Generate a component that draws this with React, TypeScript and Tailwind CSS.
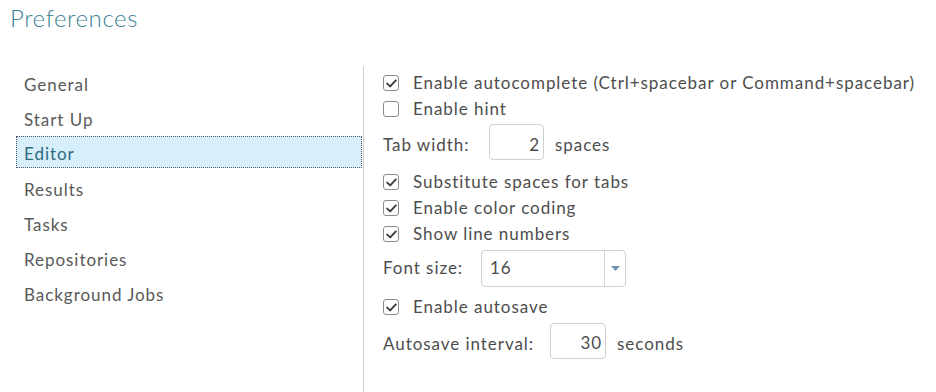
import React from "react";

const navItems = [
  "General",
  "Start Up",
  "Editor",
  "Results",
  "Tasks",
  "Repositories",
  "Background Jobs",
];

const CheckBox: React.FC<{ checked: boolean }> = ({ checked }) => (
  <span className="flex h-[16px] w-[16px] shrink-0 items-center justify-center rounded-[3px] border border-[#8c8c8c] bg-white">
    {checked && (
      <svg width="11" height="9" viewBox="0 0 11 9" fill="none">
        <path
          d="M1.2 4.6 L4.2 7.4 L9.8 1.4"
          stroke="#3a3a3a"
          strokeWidth="1.9"
          strokeLinecap="round"
          strokeLinejoin="round"
        />
      </svg>
    )}
  </span>
);

const CheckRow: React.FC<{ label: string; checked: boolean }> = ({
  label,
  checked,
}) => (
  <div className="flex h-[26px] items-center gap-[14px]">
    <CheckBox checked={checked} />
    <span>{label}</span>
  </div>
);

export default function App() {
  return (
    <div
      className="flex h-screen w-full flex-col bg-white text-[17px] tracking-[0.95px] text-[#4d4d4d]"
      style={{ fontFamily: "Lato, 'Open Sans', sans-serif" }}
    >
      <h1 className="h-[66px] pl-[10px] pt-[3px] text-[24px] font-light leading-[30px] tracking-[0.6px] text-[#3b7f95]">
        Preferences
      </h1>

      <div className="flex flex-1">
        {/* left nav */}
        <div className="flex w-[364px] flex-col gap-[3px] border-r border-[#d0d0d0] pl-[16px] pr-[1px]">
          {navItems.map((item) => (
            <div
              key={item}
              className={
                item === "Editor"
                  ? "flex h-[32px] items-center border border-dotted border-[#555] bg-[#d6effb] pl-[7px] pt-[4px] text-[#2f6c80]"
                  : "flex h-[32px] items-center pl-[8px] pt-[5px] text-[#595959]"
              }
            >
              {item}
            </div>
          ))}
        </div>

        {/* editor settings */}
        <div className="flex flex-col pl-[19px] pt-[4px]">
          <CheckRow
            label="Enable autocomplete (Ctrl+spacebar or Command+spacebar)"
            checked
          />
          <CheckRow label="Enable hint" checked={false} />

          <div className="flex h-[40px] items-center">
            <span className="w-[106px] pt-[6px]">Tab width:</span>
            <div className="flex h-[36px] w-[55px] items-center justify-end rounded-[4px] border border-[#cfcfcf] pr-[3px] pt-[5px]">
              2
            </div>
            <span className="ml-[11px] pt-[6px]">spaces</span>
          </div>

          <div className="h-[7px]" />
          <CheckRow label="Substitute spaces for tabs" checked />
          <CheckRow label="Enable color coding" checked />
          <CheckRow label="Show line numbers" checked />

          <div className="flex h-[42px] items-center">
            <span className="w-[98px]">Font size:</span>
            <div className="flex h-[37px] w-[145px] items-center rounded-[4px] border border-[#cfcfcf]">
              <span className="flex-1 pl-[8px]">16</span>
              <span className="flex h-full w-[21px] items-center justify-center border-l border-[#d6d6d6]">
                <svg width="9" height="5" viewBox="0 0 9 5">
                  <path d="M0 0 H9 L4.5 5 Z" fill="#6f93b3" />
                </svg>
              </span>
            </div>
          </div>

          <div className="h-[5px]" />
          <CheckRow label="Enable autosave" checked />

          <div className="flex h-[42px] items-center">
            <span className="w-[167px] pt-[5px]">Autosave interval:</span>
            <div className="flex h-[36px] w-[56px] items-center justify-end rounded-[4px] border border-[#cfcfcf] pr-[3px] pt-[3px]">
              30
            </div>
            <span className="ml-[11px] pt-[5px]">seconds</span>
          </div>
        </div>
      </div>
    </div>
  );
}
